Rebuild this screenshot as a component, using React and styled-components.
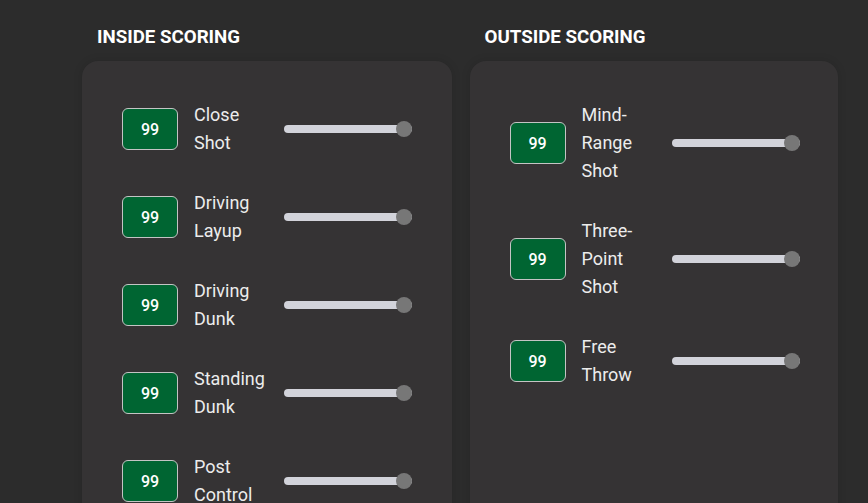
import React from "react";
import styled, { createGlobalStyle } from "styled-components";

const GlobalStyle = createGlobalStyle`
  body {
    margin: 0;
    background: #2c2c2c;
    font-family: Roboto, "Liberation Sans", sans-serif;
    overflow: hidden;
  }
`;

const Page = styled.div`
  display: flex;
  flex-flow: row nowrap;
  gap: 17.5px;
  padding: 24px 0 0 82px;
`;
const Column = styled.section`
  width: ${(p) => p.width}px;
  flex-shrink: 0;
`;
const Heading = styled.h2`
  margin: 0 0 11px;
  padding-left: 15px;
  font-size: 18.72px;
  line-height: 26px;
  font-weight: 700;
  color: #ffffff;
  text-transform: uppercase;
`;
const Card = styled.div`
  background: #353334;
  border-radius: 16px;
  padding: 40px;
  min-height: 480px;
  display: flex;
  flex-flow: column nowrap;
  gap: 32px;
  box-shadow: 0 0 10px rgba(0, 0, 0, 0.12);
`;
const Row = styled.div`
  display: flex;
  align-items: center;
  gap: 16px;
`;
const Badge = styled.div`
  box-sizing: border-box;
  width: 56px;
  height: 42px;
  flex-shrink: 0;
  display: flex;
  justify-content: center;
  align-items: center;
  background: #006532;
  border: 1px solid #c4c4c4;
  border-radius: 6px;
  color: #ffffff;
  font-size: 16px;
  font-weight: 500;
`;
const Label = styled.div`
  width: 74px;
  flex-shrink: 0;
  font-size: 18px;
  line-height: 28px;
  color: #ececec;
`;
const Slider = styled.input`
  -webkit-appearance: none;
  appearance: none;
  width: 128px;
  height: 8px;
  margin: 0;
  background: #d2d3da;
  border-radius: 4px;
  outline: none;
  &::-webkit-slider-thumb {
    -webkit-appearance: none;
    width: 16px;
    height: 16px;
    border-radius: 50%;
    background: #777777;
    border: none;
  }
`;

const inside = ["Close Shot", "Driving Layup", "Driving Dunk", "Standing Dunk", "Post Control"];
const outside = ["Mind-Range Shot", "Three-Point Shot", "Free Throw"];

function Attribute({ name }) {
  return (
    <Row>
      <Badge>99</Badge>
      <Label>{name}</Label>
      <Slider type="range" min="0" max="99" defaultValue="99" />
    </Row>
  );
}

export default function App() {
  return (
    <>
      <GlobalStyle />
      <Page>
        <Column width={370}>
          <Heading>Inside Scoring</Heading>
          <Card>
            {inside.map((n) => (
              <Attribute key={n} name={n} />
            ))}
          </Card>
        </Column>
        <Column width={368}>
          <Heading>Outside Scoring</Heading>
          <Card>
            {outside.map((n) => (
              <Attribute key={n} name={n} />
            ))}
          </Card>
        </Column>
      </Page>
    </>
  );
}
